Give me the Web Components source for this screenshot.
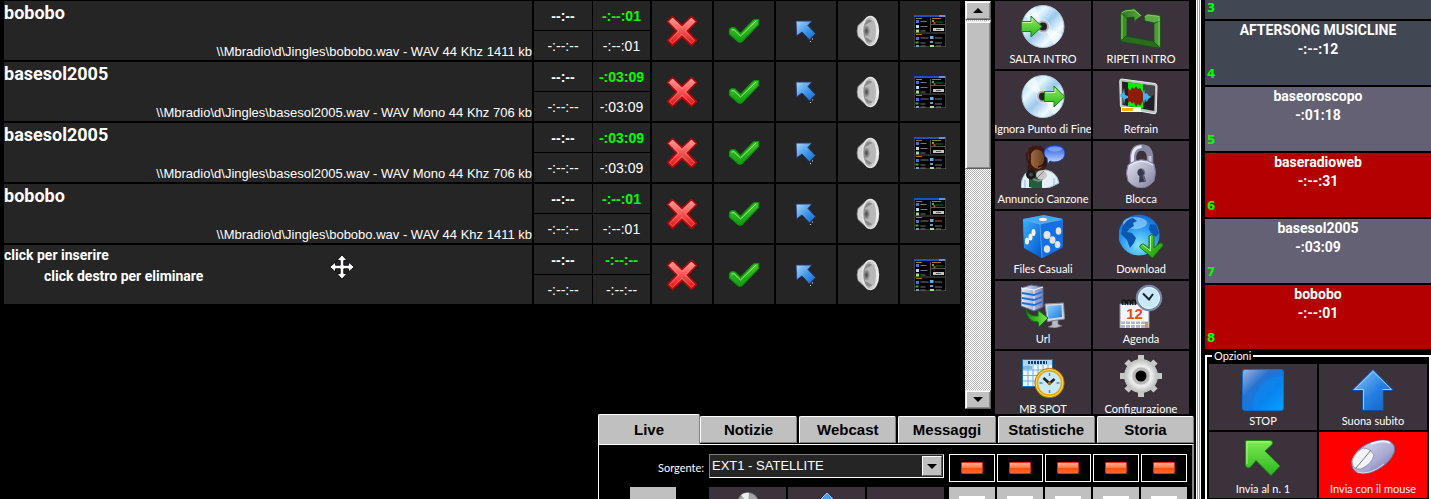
<!DOCTYPE html>
<html lang="it">
<head>
<meta charset="utf-8">
<title>MB Studio</title>
<style>
  :root {
    --tile: #3c323c;
    --cell: #252525;
    --face: #c0c0c0;
    --green: #00ff00;
    --title: Roboto, "Liberation Sans", sans-serif;
    --caption: Lato, "Liberation Sans", sans-serif;
    --sans: "Liberation Sans", Arial, sans-serif;
  }
  body {
    margin: 0;
    height: 100vh;
    overflow: hidden;
    background: #000;
    color: #fff;
    font: 13px/16px var(--sans);
  }
</style>
</head>
<body>
<mb-studio></mb-studio>

<script>
// Icon drawings. Row icons use a 32px box, command icons a 44px box.
const icons = {
  cross: [32, `
    <defs><linearGradient id="g" x2="0" y2="1"><stop offset="0" stop-color="#ffa09c"/><stop offset=".45" stop-color="#fa5a58"/><stop offset="1" stop-color="#d80c10"/></linearGradient></defs>
    <path d="M6.500 1.500 16 10.500 25.500 1.500 30.500 6.500 21.500 16l9 9.500-5 5L16 21.500 6.500 30.500 1.500 25.500 10.500 16 1.500 6.500z" fill="url(#g)" stroke="#b40808" stroke-width="1.600" stroke-linejoin="round"/>
    <path d="M6.500 3.800 16 12.800 25.500 3.800 28.200 6.500 19 16l9.200 9.500-2.700 2.700L16 19 6.500 28.200 3.800 25.500 13 16 3.800 6.500z" fill="none" stroke="#ff9c98" stroke-opacity=".45"/>`],
  check: [32, `
    <defs><linearGradient id="g" x2="0" y2="1"><stop offset="0" stop-color="#48c830"/><stop offset="1" stop-color="#129c10"/></linearGradient></defs>
    <path d="M1.500 15.500Q1.500 13 4.500 12.500L7 13l5.500 5.500L25 5.500q1-1 3-1h2.500v5L14 26.500q-2 1.500-4 0L1.500 19z" fill="url(#g)" stroke="#0a960a" stroke-width="1.200" stroke-linejoin="round"/>
    <path d="M3.500 15 6 14.700l6.500 6.300L28 6" fill="none" stroke="#a0ec88"/>`],
  pointer: [32, `
    <defs><linearGradient id="g" x2="1" y2="1"><stop offset="0" stop-color="#a8d8fc"/><stop offset=".55" stop-color="#3c94e8"/><stop offset="1" stop-color="#1464c0"/></linearGradient></defs>
    <path d="M6 6h16l-4 4.500 7.500 8-6 6.500-7.500-8-5.500 4z" fill="url(#g)" stroke="#2c3468"/>
    <path d="M22 24h1M20 26.500h1" stroke="#e8e8e8"/>`],
  speaker: [32, `
    <defs><linearGradient id="g"><stop offset="0" stop-color="#8c8c8c"/><stop offset="1" stop-color="#f4f4f4"/></linearGradient>
    <radialGradient id="r" cx=".35"><stop offset="0" stop-color="#444"/><stop offset="1" stop-color="#b4b4b4"/></radialGradient></defs>
    <path d="M6 10.500Q4 16 6 21.500L15 30q3 1 4 0V2q-1-1-4 0z" fill="#d8d8d8" stroke="#777" stroke-width=".8"/>
    <ellipse cx="18.500" cy="16" rx="8" ry="14.500" fill="url(#g)" stroke="#e8e8e8" stroke-width="1.400"/>
    <ellipse cx="17.500" cy="16" rx="5.500" ry="11.500" fill="#888"/>
    <path d="M13 10 22 5q4 11 0 22l-9-5z" fill="#b8b8b8"/>
    <ellipse cx="15.500" cy="16" rx="3.600" ry="6" fill="url(#r)"/>`],
  window: [32, `
    <path d="M0 0h32v32H0z" fill="#000" stroke="#777"/><path d="M0 0h32v2H0z" fill="#1c50c8"/><path d="M25 .5h6v1h-6z" fill="#ccd"/>
    <path d="M1 18h30M16.500 3v14M17 9.500h14" stroke="#555"/>
    <path d="M2 3.500h6M18 3.500h9M2 19.500h6" stroke="#a87818"/>
    <path d="M2 5h3v3H2zM2 22h3v3H2z" fill="#3c78dc"/><path d="M2 10h3v3H2z" fill="#b4dcf0"/><path d="M2 14.500h3v3H2zM16 30h4v2h-4z" fill="#98e488"/>
    <path d="M16 21h3.500v3H16z" fill="#50b4f8"/><path d="M16 26h3v2h-3zM2 30h3v2H2z" fill="#7898bc"/><path d="M1.500 26.500h3v2h-3z" fill="#30b430"/>
    <path d="M18 5h2v2h-2z" fill="#2ac830"/><path d="M19.500 7h2v2h-2z" fill="#e43820"/><path d="M22 7h7" stroke="#087808"/>
    <path d="M19 13h11v3H19z" fill="#c4c4c4"/><path d="M22 14.500h5" stroke="#555"/>
    <path d="M6.500 6.500h6M6.500 11.500h7M6.500 16h5M6.500 23h8M6.500 28h5M6.500 31h5M21 23h7M21 28h7M22 31h5" stroke="#777"/>`],
  skip: [44, `
    <defs><linearGradient id="cd" x2="1" y2="1"><stop offset="0" stop-color="#8cc4ec"/><stop offset=".3" stop-color="#e8f8ff"/><stop offset=".5" stop-color="#9cc8ec"/><stop offset=".72" stop-color="#f0faff"/><stop offset="1" stop-color="#90bce4"/></linearGradient>
    <linearGradient id="g" x2="0" y2="1"><stop offset="0" stop-color="#90ec60"/><stop offset="1" stop-color="#2cb41c"/></linearGradient></defs>
    <circle cx="22" cy="22.500" r="21" fill="url(#cd)" stroke="#b0c8dc"/>
    <path d="m22 22.500-18-10A21 21 0 0 1 14 3zM22 22.500l19 8a21 21 0 0 1-8 10z" fill="#fff" opacity=".6"/>
    <circle cx="22" cy="22.500" r="6.500" fill="#a8b4bc" stroke="#e4ecf0"/><circle cx="22" cy="22.500" r="4" fill="#282028"/>
    <path d="M.5 17.500h9.500V12l11 10.500-11 10.500v-5.500H.5z" fill="url(#g)" stroke="#168410" stroke-linejoin="round"/>
    <path d="M1.500 18.500H11v-4" fill="none" stroke="#c4ffa0"/>`],
  ignore: [44, `
    <defs><linearGradient id="cd" x2="1" y2="1"><stop offset="0" stop-color="#8cc4ec"/><stop offset=".3" stop-color="#e8f8ff"/><stop offset=".5" stop-color="#9cc8ec"/><stop offset=".72" stop-color="#f0faff"/><stop offset="1" stop-color="#90bce4"/></linearGradient>
    <linearGradient id="g" x2="0" y2="1"><stop offset="0" stop-color="#90ec60"/><stop offset="1" stop-color="#2cb41c"/></linearGradient></defs>
    <circle cx="22" cy="22.500" r="21" fill="url(#cd)" stroke="#b0c8dc"/>
    <path d="m22 22.500-18-10A21 21 0 0 1 14 3zM22 22.500l19 8a21 21 0 0 1-8 10z" fill="#fff" opacity=".6"/>
    <circle cx="22" cy="22.500" r="6.500" fill="#a8b4bc" stroke="#e4ecf0"/><circle cx="22" cy="22.500" r="4" fill="#282028"/>
    <path d="M23.500 17.500H33V12l10.800 10.500L33 33v-5.500h-9.500z" fill="url(#g)" stroke="#168410" stroke-linejoin="round"/>
    <path d="M24.500 18.500H34v-4" fill="none" stroke="#c4ffa0"/>`],
  repeat: [44, `
    <defs><linearGradient id="g" x2="1" y2="0"><stop offset="0" stop-color="#2c7420"/><stop offset="1" stop-color="#58a840"/></linearGradient></defs>
    <g stroke="#184c14" stroke-width=".8" stroke-linejoin="round">
      <path d="M1.500 9 8 11v22l-6.500 4.500z" fill="#3c8c2c"/>
      <path d="M1.500 37.500 7 32l29 5.500 5.500 7z" fill="#286c1c"/>
      <path d="M35 17l6.500-4v31.500L35 38z" fill="#4c9c38"/>
      <path d="M25 12.500 29 10l12.500 1.500V17l-6 2L26 17z" fill="#5cac44"/>
      <path d="M1.500 9 6 6l8-1V3.500l9 8-8 6v-4.500L8 14z" fill="url(#g)"/>
    </g>
    <path d="M2.500 9 6 7l9-1 6.500 5.500M26 12.500l3-1.500 11 1.500M40 14v27M3 10.500V35" fill="none" stroke="#88c868"/>`],
  refrain: [44, `
    <path d="M2.500 5 36 9.500q2 .5 2 2.500l-.8 26q-.2 2-2.200 1.700L3.500 34q-2-.3-2.100-2.500L.8 7q0-2 1.700-2z" fill="#bdbdc1" stroke="#eee"/>
    <path d="M3 7.500 36 12l-.8 25L3.500 31z" fill="#202024"/><path d="M9 8.300 24 10.300V34.500L9 32z" fill="#00f000"/><path d="M25 10.600 36 12l-.2 8-10.800 9z" fill="#46464a"/>
    <path d="M9 14l2 3 2-4 2 2 2-3 2 3 2-1 3 5v8l-3 5-2-2-2 3-2-5-2 2-2-3-2 2z" fill="#8c1c08"/>
    <path d="M1.500 20 4 19l1-5 1 7 3 1v2l-3 1-1 6-1-7-2.500-1zM24 18l1-3 1 5 2-1 1 2 3 2-3 2-1 3-2-3-1 5-1-4z" fill="#40b4ec"/>
    <path d="M2 33h20v5H2z" fill="#fff"/><path d="M3 34h11v3H3z" fill="#f4b400"/>`],
  announce: [44, `
    <defs><linearGradient id="g" x2="0" y2="1"><stop offset="0" stop-color="#1c4cdc"/><stop offset="1" stop-color="#d0e8ff"/></linearGradient>
    <linearGradient id="f" x2="1" y2="0"><stop offset="0" stop-color="#9c6840"/><stop offset="1" stop-color="#684020"/></linearGradient></defs>
    <path d="M0 40q2-13 12-14h13q11 2 13 13-16 10-38 5z" fill="#e4f0f8" stroke="#9cb8cc"/><path d="M8 27h13v17q-8 1-13-1z" fill="#245c3c"/><path d="M4 36v8M33 34v8" stroke="#90b8e0"/>
    <path d="M7 5Q12 0 20 2l7 7-1 12-3 5-12 2-5-5q4-6 1-18z" fill="#40180c"/>
    <path d="M10 10q3-6 8-4t5 8q0 10-5 11-7-1-8-6z" fill="url(#f)"/>
    <path d="M7 8q-3 4 0 9t0 9" fill="none" stroke="#40180c" stroke-width="2"/>
    <path d="M17 23q9-2 8-11" fill="none" stroke="#181818" stroke-width="1.500"/>
    <circle cx="10" cy="30.500" r="5" fill="#181818"/><circle cx="10" cy="30.500" r="2" fill="#484848"/><path d="M12 35q9 5 12-5" fill="none" stroke="#888" stroke-width="2"/>
    <ellipse cx="20.500" cy="31" rx="5.500" ry="4.500" fill="#c8c8c8"/><path d="m16 34 7-7" stroke="#777"/>
    <path d="M34 1c7 0 10 4 10 8.500S40 18 33 18q-3 0-4-1l-2.500 3.500-.5-6q-3-2.500-3-5C23 4 27 1 34 1z" fill="url(#g)" stroke="#1838a0"/>
    <ellipse cx="34" cy="5" rx="7" ry="2.500" fill="#9cc0ff" opacity=".6"/>`],
  lock: [44, `
    <defs><linearGradient id="g" x2="1" y2="1"><stop offset="0" stop-color="#e4e4f4"/><stop offset=".6" stop-color="#a8a8c0"/><stop offset="1" stop-color="#7c7c98"/></linearGradient></defs>
    <path d="M14 22V12q1-8.500 8.500-8.500T31 12v10" fill="none" stroke="#8888a4" stroke-width="6.500"/>
    <path d="M13.500 22V12q1-9 9-9.500" fill="none" stroke="#e8e8f8" stroke-width="3"/><path d="M31 12v10" stroke="#c4c4d8" stroke-width="3"/>
    <path d="M9 21Q22 11 35 20q3 8 0 17-6 7-13 7T9 37q-3-8 0-16z" fill="url(#g)" stroke="#7c7c98"/>
    <path d="M10 22Q22 13 34 21" fill="none" stroke="#f4f4ff"/>
    <path d="M22 24.500a4 4 0 0 1 3 6.500l2 6.500-7 1 .5-6.500a4 4 0 0 1 1.500-7.500z" fill="#383850"/><path d="m23 25 3 4-2 3 2 5" fill="none" stroke="#707088"/>`],
  dice: [44, `
    <defs><linearGradient id="g" x2="1" y2="1"><stop offset="0" stop-color="#3cb0ff"/><stop offset="1" stop-color="#0054cc"/></linearGradient></defs>
    <path d="M2 5 23 1l19 4v28L21 44 3 34z" fill="#1068d8"/>
    <path d="M2 5 23 1l19 4-23 5.500z" fill="#44a8f8"/><path d="M2 5.500 19 10l2 34L3 34z" fill="url(#g)"/><path d="M19 10 42 5.500 41 34 21 44z" fill="#1470e4"/>
    <path d="M2.500 5.500 19 10l22-4.500M19 10l2 34" fill="none" stroke="#70c4ff" stroke-width=".6"/>
    <g fill="#f8f4ec"><ellipse cx="22" cy="5.500" rx="4" ry="1.700"/><ellipse cx="6" cy="27" rx="2" ry="3.500"/><ellipse cx="9.500" cy="23" rx="2" ry="3.500"/><ellipse cx="12.500" cy="18.500" rx="2" ry="3.500"/></g>
    <g fill="#e4e4e4"><ellipse cx="26" cy="21" rx="3.500" ry="4"/><ellipse cx="37.500" cy="17" rx="2.800" ry="3.800"/><ellipse cx="31.500" cy="26" rx="3" ry="3.800"/><ellipse cx="26" cy="35" rx="3.200" ry="3.800"/><ellipse cx="36.500" cy="30.500" rx="2.800" ry="3.500"/></g>`],
  download: [44, `
    <defs><radialGradient id="g" cx=".5" cy=".75" r=".8"><stop offset="0" stop-color="#84e4ff"/><stop offset=".6" stop-color="#2494f0"/><stop offset="1" stop-color="#0c64cc"/></radialGradient>
    <linearGradient id="d" x2="1" y2="1"><stop offset="0" stop-color="#64dc3c"/><stop offset="1" stop-color="#18940c"/></linearGradient></defs>
    <circle cx="20" cy="21" r="20.500" fill="url(#g)"/><ellipse cx="16" cy="9" rx="12" ry="6" fill="#a8dcff" opacity=".6"/>
    <path d="M3 14Q7 5 14 4l4 3-4 2 1 3-5 3-2 3 5 1 4 5-2 5-4 5-3-8-6-6zM31 10l6 1 3 8-3 4-5-4-2-4z" fill="#0c58b0"/>
    <path d="M30 22q2.500-3 5 0v12l6-5q3 0 3 2.500L33.500 44 20.500 33q1-3.500 4-3l5.500 4z" fill="url(#d)" stroke="#14780c"/>
    <path d="M31.500 22v15l-8-6" fill="none" stroke="#b0f888"/>`],
  url: [44, `
    <defs><linearGradient id="g"><stop offset="0" stop-color="#e8ecfc"/><stop offset="1" stop-color="#7c84b8"/></linearGradient>
    <linearGradient id="a" x2="1"><stop offset="0" stop-color="#148c14"/><stop offset="1" stop-color="#78ec48"/></linearGradient>
    <linearGradient id="s" x2="1" y2="1"><stop offset="0" stop-color="#8cd0ff"/><stop offset="1" stop-color="#1c78dc"/></linearGradient></defs>
    <path d="M0 4 10 1l12 2v20l-9 4L0 22z" fill="url(#g)" stroke="#5c6490"/><path d="M0 4 13 6l9-3M13 6v20" fill="none" stroke="#f4f4ff"/>
    <path d="m1 9 12 2 8-3M1 14l12 2 8-3M1 19l12 2 8-3" fill="none" stroke="#1c70d8" stroke-width="1.800"/>
    <path d="M24 20 42.500 19l1 16-17 2.500z" fill="#d4d8e0" stroke="#888ca0"/><path d="m26 22 14.500-1 .5 12-13.500 1.800z" fill="url(#s)"/>
    <path d="m31 37 6-1v4l4 2-7 2-7-1 4-2z" fill="#b8b8c0" stroke="#707078" stroke-width=".6"/>
    <path d="M5 25q3 8 12 7v-6l10 8-9 9-1-5Q6 38 5 25z" fill="url(#a)" stroke="#107010"/>`],
  agenda: [44, `
    <path d="M1 20h29v24H1z" fill="#f8f8ff" stroke="#8888b8"/><path d="M2 37.500h27v6H2z" fill="#b0b0dc"/><path d="M6.500 37v7M11.500 37v7M16.500 37v7M21.500 37v7M2 40.500h27" stroke="#fff"/><path d="M26 38h3v6h-3z" fill="#e88858"/>
    <text x="15.500" y="35" text-anchor="middle" font-family="Liberation Sans" font-weight="700" font-size="15" fill="#e84c10">12</text>
    <path d="M4 21q-2-5 1-5 3 1 1 5M9 21q-2-5 1-5 3 1 1 5M14 21q-2-5 1-5 3 1 1 5" fill="none" stroke="#141414" stroke-width="1.500"/>
    <circle cx="30" cy="14" r="12" fill="#c8e8fc" stroke="#7888a8" stroke-width="2.500"/><circle cx="30" cy="14" r="10.500" fill="none" stroke="#f0f8ff"/>
    <path d="m24 9.500 6 6L34 10" fill="none" stroke="#182028" stroke-width="2"/>`],
  spot: [44, `
    <path d="M1.500 5.500h30v27h-30z" fill="#f0f8ff" stroke="#1870b8"/><path d="M2 6h29v5H2z" fill="#b0d4f4"/>
    <path d="M7 8.500h19" stroke="#103c68" stroke-width="3" stroke-dasharray="2 1"/>
    <path d="M2 16h29M2 21.500h29M2 27h29M7 11v21M12 11v21M17 11v21M22 11v21M27 11v21" stroke="#6cb0e8"/><path d="M2 11.500h9v4H2z" fill="#78b8ec"/>
    <circle cx="28.500" cy="29" r="13" fill="#c8e8fc" stroke="#e8a800" stroke-width="3.500"/><circle cx="28.500" cy="29" r="13.500" fill="none" stroke="#ffe060"/><circle cx="28.500" cy="29" r="14.700" fill="none" stroke="#a86c00" stroke-width=".7"/>
    <path d="M28.500 19v3M28.500 36v3M18.500 29h3M35.500 29h3" stroke="#5888b0" stroke-width="1.500"/>
    <path d="m22.500 24 6 5.500L33.500 25" fill="none" stroke="#202028" stroke-width="2.500"/><circle cx="28.500" cy="29.500" r="1.800" fill="#a87010"/>`],
  gear: [44, `
    <defs><radialGradient id="g"><stop offset=".3" stop-color="#c8c8c8"/><stop offset=".6" stop-color="#f0f0f0"/><stop offset="1" stop-color="#bcbcbc"/></radialGradient></defs>
    <path d="M22 1v42M1 22h42M7.500 7.500l29 29M36.500 7.500l-29 29" stroke="#c8c8c8" stroke-width="6"/>
    <circle cx="22" cy="22" r="16.500" fill="url(#g)" stroke="#c4c4c4"/><circle cx="22" cy="22" r="9" fill="#b8b8b8" stroke="#dcdcdc"/><circle cx="22" cy="22" r="5.500" fill="#000"/>`],
  stop: [44, `
    <defs><linearGradient id="g" x2="1" y2="1"><stop offset="0" stop-color="#a4b4dc"/><stop offset=".35" stop-color="#2474d4"/><stop offset=".65" stop-color="#0c7ce8"/><stop offset="1" stop-color="#0ca4ff"/></linearGradient></defs>
    <rect x="1.500" y="1.500" width="41" height="41" rx="2.500" fill="url(#g)" stroke="#0870d8"/>
    <path d="M12 36Q16 10 42 8v34H14z" fill="#0098ff" opacity=".35"/>`],
  up: [44, `
    <defs><linearGradient id="g" x2="1" y2="1"><stop offset="0" stop-color="#90ccfc"/><stop offset=".55" stop-color="#2480e0"/><stop offset="1" stop-color="#0c60c4"/></linearGradient></defs>
    <path d="M22 1.500 43 22.500H32.500v20h-21v-20H.8z" fill="url(#g)" stroke="#0c4ca0"/>
    <path d="M22 3.500 3.500 21.500h9v20M22 3.500 40.500 21.500h-9" fill="none" stroke="#98d0ff"/>`],
  first: [44, `
    <defs><linearGradient id="g" x2="0" y2="1"><stop offset="0" stop-color="#7cec50"/><stop offset="1" stop-color="#2cb420"/></linearGradient></defs>
    <path d="M5 4.500h24q2.500 0 2.500 2t-1.500 3L24 15l15 15-9 9.500-15-15-5 6q-2 2-4 1-1.500-1-1.500-3V6q0-1.500 1-1.500z" fill="url(#g)" stroke="#1c8c14"/>
    <path d="M6 28V6h23" fill="none" stroke="#a8f880"/>`],
  mouse: [44, `
    <defs><linearGradient id="g" x2="1" y2="1"><stop offset="0" stop-color="#e4e4f8"/><stop offset=".6" stop-color="#a8a8d4"/><stop offset="1" stop-color="#686894"/></linearGradient></defs>
    <path d="M1 25Q3 15 16 8 28 2.500 38 5q8 4 5 12-4 10-17 17-12 6-21 2-5-3-4-11z" fill="url(#g)" stroke="#6c6c98"/>
    <path d="M1 25Q3 17 12 12q7 0 11 7-2 9-13 14-9 1-9-8z" fill="#f4f4f8" stroke="#9898b8"/><path d="M5 32 20 14" stroke="#787890"/>
    <path d="M20 8Q33 3 39 7" fill="none" stroke="#f0f0ff" stroke-width="2"/><path d="M6 36q12 4 27-8" fill="none" stroke="#dcdcf0"/>`],
  move: [26, `
    <path d="m13 .8 5 5.700h-3.200v4.700h4.700V8l5.700 5-5.700 5v-3.200h-4.700v4.700H18l-5 5.700-5-5.700h3.200v-4.700H6.500V18L.8 13l5.700-5v3.200h4.700V6.500H8z" fill="#fff" stroke="#10101c"/>`],
  disc: [22, `<circle cx="11" cy="11" r="10.500" fill="#a4a4a8" stroke="#666"/><path d="M11 11 4 3q4-3 8-2z" fill="#eee"/><circle cx="11" cy="11" r="4" fill="#666"/>`],
  rise: [22, `<path d="m11 1 10 10h-5v11H6V11H1z" fill="#4c9cec" stroke="#90ccfc"/>`],
  led: [22, `
    <defs><linearGradient id="g" x2="0" y2="1"><stop offset="0" stop-color="#ffb498"/><stop offset=".45" stop-color="#ff7c50"/><stop offset=".5" stop-color="#ff4c10"/><stop offset="1" stop-color="#ff6c30"/></linearGradient></defs>
    <rect x=".5" y="5.500" width="21" height="11" rx="1" fill="url(#g)" stroke="#d83008"/>`]
};

class MbIcon extends HTMLElement {
  constructor() {
    super();
    this.attachShadow({ mode: "open" });
  }

  connectedCallback() {
    const [size, body] = icons[this.getAttribute("name")];
    this.shadowRoot.innerHTML = `
      <style>
        :host { display: block; flex: none; }
        svg { display: block; }
      </style>
      <svg width="${size}" height="${size}" viewBox="0 0 ${size} ${size}" aria-hidden="true">${body}</svg>
    `;
  }
}

// Icon tile with its caption below
class MbTile extends HTMLElement {
  constructor() {
    super();
    this.attachShadow({ mode: "open" });
  }

  connectedCallback() {
    this.shadowRoot.innerHTML = `
      <style>
        :host { display: grid; min-width: 0; }
        button {
          display: flex;
          flex-direction: column;
          align-items: center;
          gap: var(--tile-gap, 4px);
          min-width: 0;
          padding: var(--tile-pad, 3px) 0 0;
          border: 0;
          overflow: hidden;
          background: var(--tile);
          color: #fff;
          font: 11px/14px var(--caption);
          white-space: nowrap;
        }
        :host([active]) button { background: #ff0000; }
      </style>
      <button type="button">
        <mb-icon name="${this.getAttribute("icon")}"></mb-icon>
        <span><slot></slot></span>
      </button>
    `;
  }
}

class MbTrack extends HTMLElement {
  constructor() {
    super();
    this.attachShadow({ mode: "open" });
  }

  connectedCallback() {
    const total = this.getAttribute("total");
    const actions = [
      ["cross", "Elimina"],
      ["check", "Conferma"],
      ["pointer", "Sposta"],
      ["speaker", "Ascolta"],
      ["window", "Opzioni"]
    ];

    this.shadowRoot.innerHTML = `
      <style>
        :host {
          display: grid;
          grid-template-columns: minmax(0, 1fr) 116px repeat(5, 60px);
          gap: 2px;
          min-height: 59px;
        }
        .name {
          display: flex;
          flex-direction: column;
          justify-content: space-between;
          background: var(--cell);
          font: bold 18px/24px var(--title);
        }
        .file {
          align-self: flex-end;
          font: 13px/17px var(--sans);
          white-space: nowrap;
        }
        .times {
          display: grid;
          grid-template-columns: 58px 57px;
          grid-template-rows: 1fr 1fr;
          gap: 1px;
          font-size: 14px;
          text-align: center;
        }
        .times span {
          display: grid;
          place-items: center;
          background: var(--cell);
        }
        .times .top { font-weight: bold; }
        .times .total { color: var(--green); }
        button {
          display: grid;
          place-items: center;
          padding: 0;
          border: 0;
          background: var(--cell);
        }
      </style>
      <div class="name">
        <slot></slot>
        <span class="file"><slot name="file"></slot></span>
      </div>
      <div class="times">
        <span class="top">--:--</span>
        <span class="top total">${total}</span>
        <span>-:--:--</span>
        <span>${total}</span>
      </div>
      ${actions.map(([icon, label]) => `
        <button type="button" aria-label="${label}"><mb-icon name="${icon}"></mb-icon></button>
      `).join("")}
    `;
  }
}

class MbPlaylist extends HTMLElement {
  constructor() {
    super();
    this.attachShadow({ mode: "open" });
  }

  connectedCallback() {
    const tracks = [
      ["bobobo", "\\\\Mbradio\\d\\Jingles\\bobobo.wav - WAV 44 Khz 1411 kb", "-:--:01"],
      ["basesol2005", "\\\\Mbradio\\d\\Jingles\\basesol2005.wav - WAV Mono 44 Khz 706 kb", "-:03:09"],
      ["basesol2005", "\\\\Mbradio\\d\\Jingles\\basesol2005.wav - WAV Mono 44 Khz 706 kb", "-:03:09"],
      ["bobobo", "\\\\Mbradio\\d\\Jingles\\bobobo.wav - WAV 44 Khz 1411 kb", "-:--:01"]
    ];

    this.shadowRoot.innerHTML = `
      <style>
        :host {
          display: flex;
          flex-direction: column;
          gap: 2px;
          padding: 1px 0 0 4px;
        }
        .hint {
          position: relative;
          font-size: 14px;
          line-height: 21px;
        }
        .hint div + div { padding-left: 40px; }
        /* drag cursor over the empty slot */
        .cursor {
          position: absolute;
          left: 325px;
          top: 9px;
        }
      </style>
      ${tracks.map(([name, file, total]) => `
        <mb-track total="${total}"><span>${name}</span><span slot="file">${file}</span></mb-track>
      `).join("")}
      <mb-track total="-:--:--">
        <div class="hint">
          <div>click per inserire</div>
          <div>click destro per eliminare</div>
          <mb-icon class="cursor" name="move"></mb-icon>
        </div>
      </mb-track>
    `;
  }
}

class MbScrollbar extends HTMLElement {
  constructor() {
    super();
    this.attachShadow({ mode: "open" });
    this.shadowRoot.innerHTML = `
      <style>
        :host {
          display: flex;
          flex-direction: column;
          width: 26px;
          background: repeating-conic-gradient(#fff 0 25%, #b4b4b4 0 50%) 0 0 / 2px 2px;
        }
        button, .thumb {
          box-sizing: border-box;
          width: 26px;
          padding: 0;
          border: 1px solid;
          border-color: #e8e8e8 #606060 #606060 #e8e8e8;
          box-shadow: inset 1px 1px #fff, inset -1px -1px #888;
          background: var(--face);
        }
        button {
          display: grid;
          place-items: center;
          height: 19px;
        }
        .thumb { height: 148px; margin: 1px 0 auto; }
        svg { display: block; }
      </style>
      <button type="button" aria-label="Su"><svg width="10" height="6"><path d="M5 0l5 5H0z"/></svg></button>
      <div class="thumb"></div>
      <button type="button" aria-label="Giù"><svg width="10" height="6"><path d="M0 0h10L5 5z"/></svg></button>
    `;
  }
}

class MbCommands extends HTMLElement {
  constructor() {
    super();
    this.attachShadow({ mode: "open" });
    const commands = [
      ["skip", "SALTA INTRO"], ["repeat", "RIPETI INTRO"],
      ["ignore", "Ignora Punto di Fine"], ["refrain", "Refrain"],
      ["announce", "Annuncio Canzone"], ["lock", "Blocca"],
      ["dice", "Files Casuali"], ["download", "Download"],
      ["url", "Url"], ["agenda", "Agenda"],
      ["spot", "MB SPOT"], ["gear", "Configurazione"]
    ];
    this.shadowRoot.innerHTML = `
      <style>
        :host {
          display: grid;
          grid-template-columns: 96px 96px;
          grid-template-rows: repeat(5, 68px) 63px;
          gap: 2px;
          padding-top: 1px;
        }
      </style>
      ${commands.map(([icon, label]) => `<mb-tile icon="${icon}">${label}</mb-tile>`).join("")}
    `;
  }
}

class MbTabs extends HTMLElement {
  constructor() {
    super();
    this.attachShadow({ mode: "open" });
    const tabs = ["Live", "Notizie", "Webcast", "Messaggi", "Statistiche", "Storia"];
    this.shadowRoot.innerHTML = `
      <style>
        :host {
          display: flex;
          flex-direction: column;
          min-height: 0;
        }
        .tabs {
          display: flex;
          align-items: flex-end;
          gap: 2px;
        }
        .tabs button {
          flex: 1;
          box-sizing: border-box;
          height: 27px;
          margin-bottom: 1px;
          padding: 0;
          border: 1px solid;
          border-color: #fff #808080 #808080 #fff;
          border-radius: 2px 2px 0 0;
          background: var(--face);
          color: #000;
          font: bold 15px/24px var(--sans);
        }
        .tabs .selected {
          flex: none;
          width: 102px;
          height: 30px;
          margin: 0 -2px 0 0;
          border-bottom: 0;
        }
        .panel {
          flex: 1;
          border: 1px solid #fff;
          border-right: 2px solid #888;
          border-bottom: 0;
        }
      </style>
      <div class="tabs" role="tablist">
        ${tabs.map((tab, i) => `
          <button type="button" role="tab" aria-selected="${i === 0}" ${i === 0 ? 'class="selected"' : ""}>${tab}</button>
        `).join("")}
      </div>
      <div class="panel" role="tabpanel"><slot></slot></div>
    `;
  }
}

class MbSource extends HTMLElement {
  constructor() {
    super();
    this.attachShadow({ mode: "open" });
    this.shadowRoot.innerHTML = `
      <style>
        :host {
          display: grid;
          grid-template-columns: 105px minmax(0, 1fr) 238px;
          column-gap: 5px;
          row-gap: 5px;
          padding: 9px 5px 0 0;
        }
        label {
          font: 11px/28px var(--caption);
          text-align: right;
        }
        .combo {
          display: grid;
          grid-template-columns: minmax(0, 1fr) 20px;
          height: 20px;
          padding: 1px;
          border: 1px solid;
          border-color: #808080 #fff #fff #808080;
          background: var(--cell);
        }
        select {
          grid-area: 1 / 1 / 2 / 3;
          appearance: none;
          padding: 0 0 0 1px;
          border: 0;
          border-radius: 0;
          background: none;
          color: #fff;
          font: 13px/18px var(--sans);
        }
        .arrow {
          grid-area: 1 / 2;
          display: grid;
          place-items: center;
          border: 1px solid;
          border-color: #fff #606060 #606060 #fff;
          background: var(--face);
          pointer-events: none;
        }
        .leds {
          display: grid;
          grid-template-columns: repeat(5, 1fr);
          gap: 2px;
        }
        .leds button {
          display: grid;
          place-items: center;
          height: 28px;
          padding: 0;
          border: 1px solid #fff;
          background: #000;
        }
        .leds .fader {
          align-content: start;
          padding-top: 9px;
          border: 0;
          background: var(--face);
        }
        .fader i {
          width: 26px;
          height: 12px;
          background: #fff;
        }
        .slot {
          justify-self: end;
          width: 46px;
          margin-right: 28px;
          background: var(--face);
        }
        .players {
          display: grid;
          grid-template-columns: repeat(3, 1fr);
          gap: 2px;
        }
        .players button {
          display: grid;
          justify-items: center;
          align-content: start;
          padding: 5px 0 0;
          border: 0;
          background: var(--tile);
        }
      </style>
      <label for="source">Sorgente:</label>
      <div class="combo">
        <select id="source"><option>EXT1 - SATELLITE</option></select>
        <span class="arrow"><svg width="10" height="5"><path d="M0 0h10L5 5z"/></svg></span>
      </div>
      <div class="leds">
        ${[1, 2, 3, 4, 5].map(n => `<button type="button" aria-label="Canale ${n}"><mb-icon name="led"></mb-icon></button>`).join("")}
      </div>
      <div class="slot"></div>
      <div class="players">
        <button type="button" aria-label="Disco"><mb-icon name="disc"></mb-icon></button>
        <button type="button" aria-label="Avanti"><mb-icon name="rise"></mb-icon></button>
        <button type="button" aria-label="Libero"></button>
      </div>
      <div class="leds">
        ${[1, 2, 3, 4, 5].map(n => `<button type="button" class="fader" aria-label="Livello ${n}"><i></i></button>`).join("")}
      </div>
    `;
  }
}

class MbQueueItem extends HTMLElement {
  constructor() {
    super();
    this.attachShadow({ mode: "open" });
  }

  connectedCallback() {
    this.shadowRoot.innerHTML = `
      <style>
        :host {
          display: flex;
          flex-direction: column;
          justify-content: flex-end;
          background: #424754;
          text-align: center;
          font: bold 14px/19px var(--title);
        }
        :host([kind="jingle"]) { background: #636173; }
        :host([kind="live"]) { background: #b50000; }
        .number {
          padding: 8px 0 3px 2px;
          color: var(--green);
          font: bold 12px/15px "DejaVu Sans", sans-serif;
          text-align: left;
        }
        :host([partial]) .number { padding-top: 1px; }
      </style>
      <slot></slot>
      <div class="number">${this.getAttribute("number")}</div>
    `;
  }
}

class MbQueue extends HTMLElement {
  constructor() {
    super();
    this.attachShadow({ mode: "open" });
    const items = [
      [4, "", "AFTERSONG MUSICLINE", "-:--:12"],
      [5, "jingle", "baseoroscopo", "-:01:18"],
      [6, "live", "baseradioweb", "-:--:31"],
      [7, "jingle", "basesol2005", "-:03:09"],
      [8, "live", "bobobo", "-:--:01"]
    ];
    this.shadowRoot.innerHTML = `
      <style>
        :host {
          display: flex;
          flex-direction: column;
          gap: 2px;
        }
      </style>
      <mb-queue-item number="3" partial></mb-queue-item>
      ${items.map(([number, kind, name, time]) => `
        <mb-queue-item number="${number}" kind="${kind}"><div>${name}</div><div>${time}</div></mb-queue-item>
      `).join("")}
    `;
  }
}

class MbOptions extends HTMLElement {
  constructor() {
    super();
    this.attachShadow({ mode: "open" });
    this.shadowRoot.innerHTML = `
      <style>
        :host { display: block; }
        fieldset {
          min-width: 0;
          margin: 0;
          padding: 1px 2px 4px;
          border: 2px solid #fff;
        }
        legend {
          margin-left: 3px;
          padding: 0 2px;
          font: 11px/14px var(--caption);
        }
        .grid {
          --tile-pad: 4px;
          --tile-gap: 2px;
          display: grid;
          grid-template-columns: 1fr 1fr;
          grid-auto-rows: 66px;
          gap: 2px;
        }
      </style>
      <fieldset>
        <legend>Opzioni</legend>
        <div class="grid">
          <mb-tile icon="stop">STOP</mb-tile>
          <mb-tile icon="up">Suona subito</mb-tile>
          <mb-tile icon="first">Invia al n. 1</mb-tile>
          <mb-tile icon="mouse" active>Invia con il mouse</mb-tile>
        </div>
      </fieldset>
    `;
  }
}

class MbStudio extends HTMLElement {
  constructor() {
    super();
    this.attachShadow({ mode: "open" });
    this.shadowRoot.innerHTML = `
      <style>
        :host {
          display: grid;
          grid-template-columns: minmax(0, 1fr) 6px 229px;
          height: 100%;
        }
        main {
          display: flex;
          flex-direction: column;
          min-height: 0;
        }
        .deck { display: flex; }
        mb-playlist { flex: 1; min-width: 0; }
        mb-scrollbar { margin: 1px 4px 5px 5px; }
        mb-commands { margin-right: 7px; }
        mb-tabs { flex: 1; margin: 0 2px 0 50%; }
        .splitter {
          background: linear-gradient(to right, #fff 1px, #999 1px 2px, #fff 2px 3px, #999 3px 4px, #fff 4px 5px, #000 5px);
        }
        aside { padding-left: 3px; }
      </style>
      <main>
        <div class="deck">
          <mb-playlist></mb-playlist>
          <mb-scrollbar></mb-scrollbar>
          <mb-commands></mb-commands>
        </div>
        <mb-tabs><mb-source></mb-source></mb-tabs>
      </main>
      <div class="splitter"></div>
      <aside>
        <mb-queue></mb-queue>
        <mb-options></mb-options>
      </aside>
    `;
  }
}

customElements.define("mb-icon", MbIcon);
customElements.define("mb-tile", MbTile);
customElements.define("mb-track", MbTrack);
customElements.define("mb-playlist", MbPlaylist);
customElements.define("mb-scrollbar", MbScrollbar);
customElements.define("mb-commands", MbCommands);
customElements.define("mb-tabs", MbTabs);
customElements.define("mb-source", MbSource);
customElements.define("mb-queue-item", MbQueueItem);
customElements.define("mb-queue", MbQueue);
customElements.define("mb-options", MbOptions);
customElements.define("mb-studio", MbStudio);
</script>
</body>
</html>
